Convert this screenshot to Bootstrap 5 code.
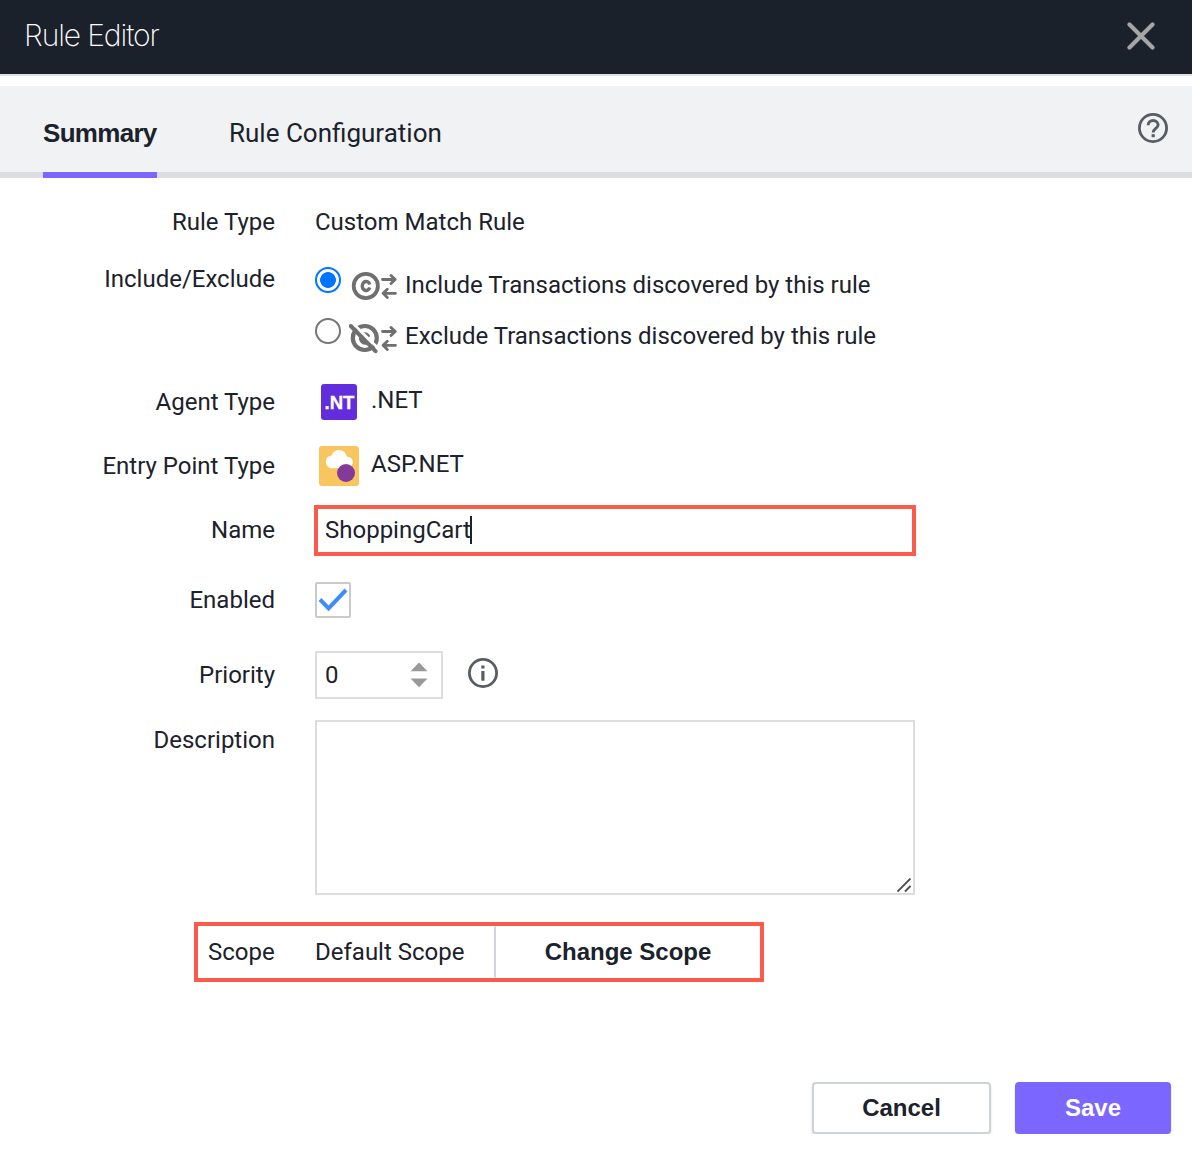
<!DOCTYPE html>
<html lang="en">
<head>
<meta charset="utf-8">
<meta name="viewport" content="width=device-width, initial-scale=1">
<title>Rule Editor</title>
<link href="https://cdn.jsdelivr.net/npm/bootstrap@5.3.0/dist/css/bootstrap.min.css" rel="stylesheet">
<style>
body{font-family:Roboto,"Liberation Sans",sans-serif;font-size:24px;line-height:28px;color:#1b222b;background:#fff;overflow:hidden}
svg{display:block;flex:none}
.title-bar{height:76px;background:#1a212b;border-bottom:2px solid #e0e0e0;padding:0 37px 0 24px}
.title-text{font-family:Inter,sans-serif;font-weight:200;font-size:30px;line-height:36px;letter-spacing:-1.1px;color:#fff;margin-top:-4px}
.close-icon{margin-top:-2px}
.tab-strip{height:92px;margin-top:10px;background:#f1f2f4;border-bottom:6px solid #dadee1;padding:0 24px 0 43px}
.tab-strip .nav-link{padding:32px 0 0;height:92px;font-size:26px;line-height:30px;color:#1b222b;border-bottom:6px solid transparent}
.tab-strip .nav-link.active{width:114px;margin-right:72px;font-family:"Liberation Sans",sans-serif;font-weight:700;letter-spacing:-.7px;border-color:#7b66ff}
.tab-label{display:inline-block;white-space:nowrap}
.help-icon{margin-top:27px}
.form-line{display:flex;align-items:flex-start}
.field-label{width:275px;flex:none;text-align:right;margin-right:40px;white-space:nowrap}
.opt{display:flex;height:28px;white-space:nowrap}
.form-check-input.pick{width:26px;height:26px;margin:-4px 0 0;flex:none;border:2px solid #767676;background-color:#fff}
.form-check-input.pick:checked{border-color:#0075ff;background-color:#fff;background-image:radial-gradient(circle,#0075ff 7.5px,transparent 8.2px)}
.name-box{width:602px;height:51px;border:4px solid #fc5a4b;margin-left:-1px;padding:0 7px 1px}
.caret{width:2px;height:28px;background:#1b222b;margin-left:-1px}
.check-box{width:36px;height:36px;border:2px solid #c8cacc;border-radius:2px}
.num-box{width:128px;height:48px;border:2px solid #dadee1;padding:0 13px 0 8px}
.desc-box{width:600px;height:175px;border:2px solid #dadee1;padding:0 1px 0 0}
.scope-box{width:570px;height:60px;border:4px solid #fc5a4b;margin-left:194px}
.strong-btn{font-family:"Liberation Sans",sans-serif;font-weight:700;font-size:24px;line-height:28px;color:#1b222b;white-space:nowrap}
.scope-btn{width:266px;height:52px;border:0;border-left:2px solid #d0d3da;border-radius:2px;background:#fff;padding:0}
.act{height:52px;border-radius:4px;padding:0;box-shadow:0 2px 3px rgba(0,0,0,.13)}
.act-cancel{width:179px;border:2px solid #ced3d8;background:#fff}
.act-save{width:156px;border:0;background:#7b66ff;color:#fff}
</style>
</head>
<body>
<header class="title-bar d-flex align-items-center justify-content-between">
  <div class="title-text">Rule Editor</div>
  <svg class="close-icon" width="28" height="28" viewBox="0 0 28 28"><path d="M2.5 2.5l23 23M25.5 2.5l-23 23" stroke="#a5a5a5" stroke-width="4.2" stroke-linecap="round"/></svg>
</header>
<nav class="tab-strip d-flex justify-content-between">
  <div class="nav flex-nowrap">
    <a class="nav-link active" href="#"><span class="tab-label">Summary</span></a>
    <a class="nav-link" href="#"><span class="tab-label">Rule Configuration</span></a>
  </div>
  <svg class="help-icon" width="30" height="30" viewBox="0 0 30 30"><circle cx="15" cy="15" r="13.6" fill="none" stroke="#575d64" stroke-width="2.8"/><path d="M10.2 12.2c0-2.8 2-4.7 4.9-4.7s5 1.8 5 4.4c0 3.4-4.9 3.8-4.9 7.6" fill="none" stroke="#575d64" stroke-width="2.9"/><path d="M13.6 21.2h3.2v3h-3.2z" fill="#575d64"/></svg>
</nav>
<main>
  <div class="form-line" style="margin-top:30px"><div class="field-label">Rule Type</div><div>Custom Match Rule</div></div>

  <div class="form-line" style="margin-top:29px">
    <div class="field-label">Include/Exclude</div>
    <div style="height:86px;padding-top:6px">
      <label class="opt"><input class="form-check-input pick" type="radio" name="mode" checked>
        <svg width="48" height="32" viewBox="0 0 48 32" style="margin:-1px 0 0 8px"><g fill="none" stroke="#6f6f6f"><circle cx="16.8" cy="16" r="12.1" stroke-width="3.8"/><path d="M20.8 14.5a3.9 4.5 0 1 0 0 3" stroke-width="3.4"/><path d="M33.5 9.5h12M42 5.4l4.2 4.1-4.2 4.1M46.5 23.3H34.5M38.3 19.2l-4.2 4.1 4.2 4.1" stroke-width="2.8" stroke-linecap="round" stroke-linejoin="round"/></g></svg>
        <span style="margin-left:8px">Include Transactions discovered by this rule</span></label>
      <label class="opt" style="margin-top:23px"><input class="form-check-input pick" type="radio" name="mode">
        <svg width="48" height="32" viewBox="0 0 48 32" style="margin:0 0 0 8px"><g fill="none" stroke="#6f6f6f"><circle cx="15.8" cy="16" r="12" stroke-width="4.2"/><path d="M14 12.5a4 4 0 0 1 5.5 2.5M12 15.5a4.5 4.5 0 0 0 6 5" stroke-width="3.8"/><path d="M33.5 9.5h12M42 5.4l4.2 4.1-4.2 4.1M46.500 23.300H34.500M38.300 19.200l-4.200 4.100 4.200 4.100" stroke-width="2.8" stroke-linecap="round" stroke-linejoin="round"/><path d="M3.5 1L31 28" stroke="#fff" stroke-width="2.6"/><path d="M1.8 4L26.500 29.200" stroke-width="4" stroke-linecap="round"/></g></svg>
        <span style="margin-left:8px">Exclude Transactions discovered by this rule</span></label>
    </div>
  </div>

  <div class="form-line" style="margin-top:33px">
    <div class="field-label" style="padding-top:4px">Agent Type</div>
    <svg width="36" height="36" viewBox="0 0 36 36" style="margin-left:6px"><rect width="36" height="36" rx="3" fill="#632cdc"/><text x="3.5" y="24.6" textLength="30" lengthAdjust="spacingAndGlyphs" font-family="Liberation Sans,sans-serif" font-weight="700" font-size="18" fill="#fff" stroke="#fff" stroke-width=".3">.NT</text></svg>
    <div style="margin-left:14px;padding-top:2px">.NET</div>
  </div>

  <div class="form-line" style="margin-top:26px">
    <div class="field-label" style="padding-top:6px">Entry Point Type</div>
    <svg width="40" height="40" viewBox="0 0 40 40" style="margin-left:4px"><rect width="40" height="40" rx="3" fill="#f8c55f"/><g fill="#fff"><circle cx="13" cy="15.7" r="6.3"/><circle cx="20" cy="11.8" r="7.7"/><circle cx="28" cy="16.2" r="5.8"/><rect x="11" y="13" width="17" height="9.2"/></g><circle cx="27" cy="27" r="9" fill="#843a99"/></svg>
    <div style="margin-left:12px;padding-top:4px">ASP.NET</div>
  </div>

  <div class="form-line" style="margin-top:19px">
    <div class="field-label" style="padding-top:11px">Name</div>
    <div class="name-box d-flex align-items-center"><span>ShoppingCart</span><span class="caret"></span></div>
  </div>

  <div class="form-line" style="margin-top:26px">
    <div class="field-label" style="padding-top:4px">Enabled</div>
    <div class="check-box"><svg width="32" height="32" viewBox="0 0 32 32"><path d="M3 15.5l8.600 8.800L29 6" fill="none" stroke="#3f8cff" stroke-width="4"/></svg></div>
  </div>

  <div class="form-line" style="margin-top:33px;height:48px">
    <div class="field-label" style="padding-top:10px">Priority</div>
    <div class="num-box d-flex align-items-center justify-content-between"><span>0</span>
      <svg width="17" height="26" viewBox="0 0 17 26"><path d="M8 .5L16.5 9.200H-.5zM-.5 16.500h17L8 25.200z" fill="#999"/></svg></div>
    <svg width="30" height="30" viewBox="0 0 30 30" style="margin:7px 0 0 25px"><circle cx="15" cy="15" r="13.6" fill="none" stroke="#575d64" stroke-width="2.8"/><path d="M13.300 7.500h3.200v2.900h-3.200zM13.300 13h3.200v9.800h-3.200z" fill="#575d64"/></svg>
  </div>

  <div class="form-line" style="margin-top:21px">
    <div class="field-label" style="padding-top:6px">Description</div>
    <div class="desc-box d-flex align-items-end justify-content-end"><svg width="15" height="15" viewBox="0 0 15 15"><path d="M.5 13.500L13.500 .5M8 13.500L13.500 8" stroke="#505050" stroke-width="1.9"/></svg></div>
  </div>

  <div class="scope-box d-flex" style="margin-top:27px">
    <div class="d-flex align-items-center" style="width:296px;padding-left:10px"><span style="width:107px">Scope</span><span>Default Scope</span></div>
    <button class="scope-btn strong-btn">Change Scope</button>
  </div>
</main>
<footer class="d-flex justify-content-end" style="margin-top:100px;padding-right:21px;gap:24px">
  <button class="btn strong-btn act act-cancel">Cancel</button>
  <button class="btn strong-btn act act-save">Save</button>
</footer>
<script src="https://cdn.jsdelivr.net/npm/bootstrap@5.3.0/dist/js/bootstrap.bundle.min.js"></script>
</body>
</html>
